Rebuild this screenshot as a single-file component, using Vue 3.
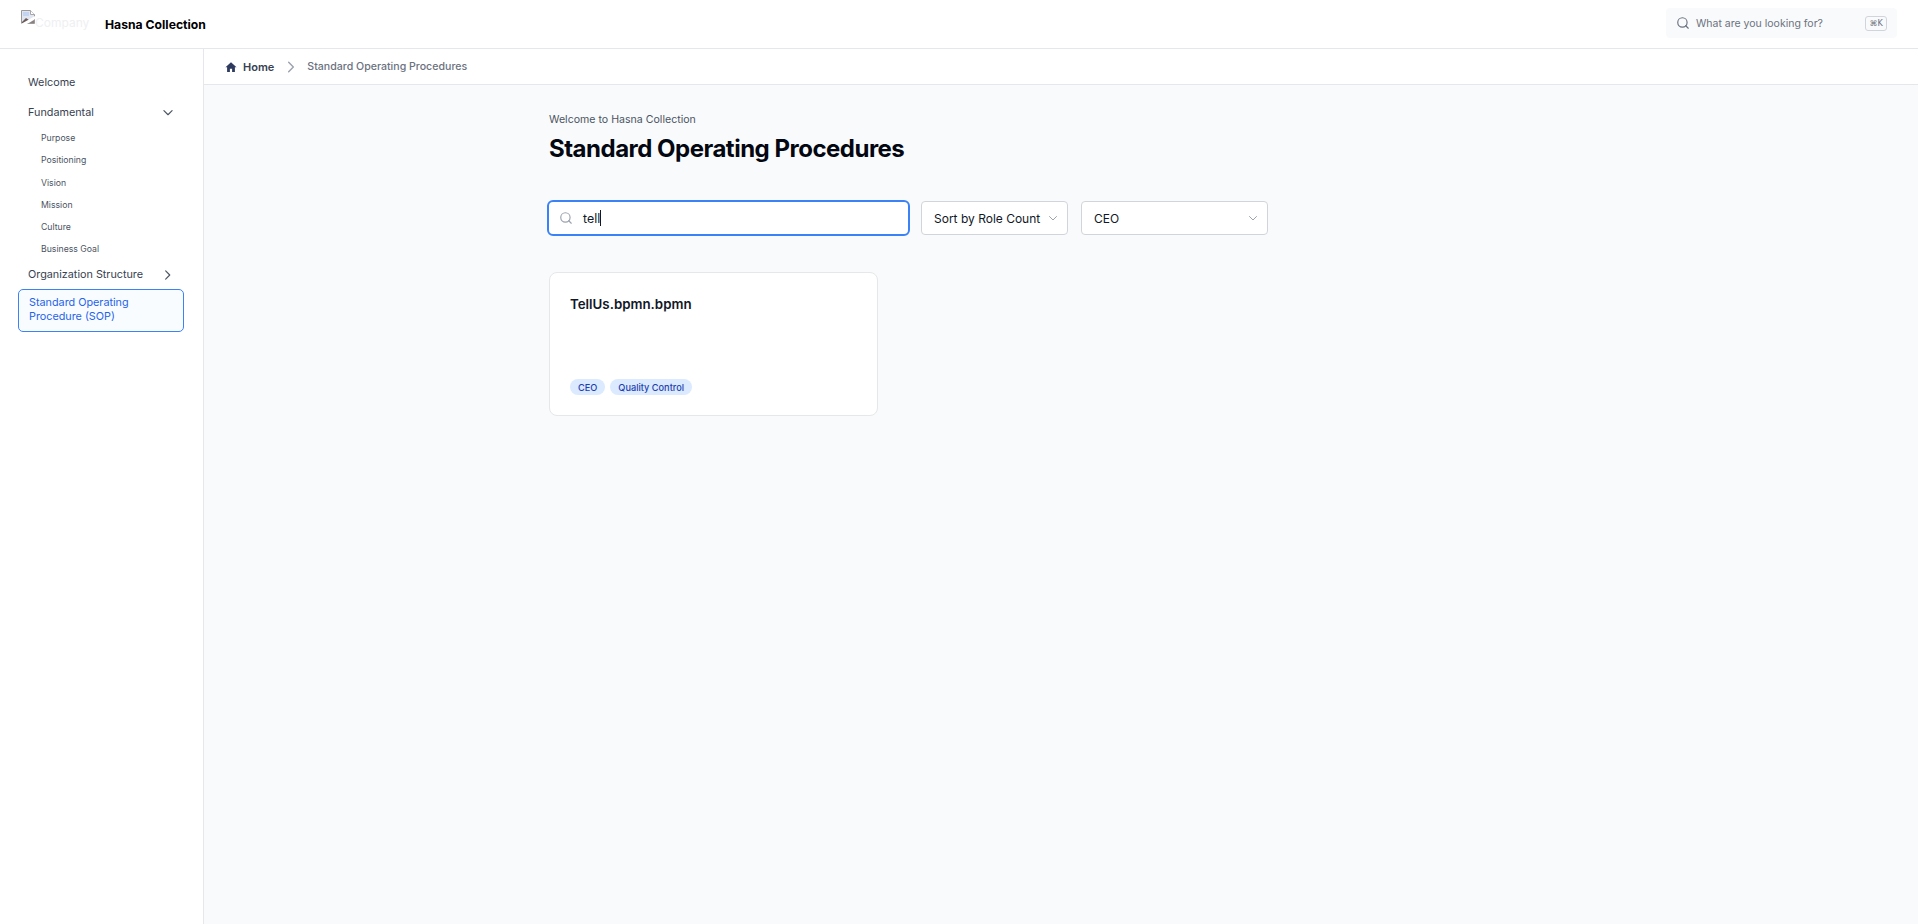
<template>
  <div class="page">
    <header class="topbar">
      <div class="brand">
        <div class="logo">
          <svg class="broken" width="14" height="14" viewBox="0 0 14 14">
            <path d="M.5 .5h9l4 4v9H.5z" fill="#dfe6f2" stroke="#9a9a9a" />
            <path d="M9.500 .5v4h4" fill="#fff" stroke="#a8a8a8" />
            <path d="M2 2h6v4H2z" fill="#c4d4f0" />
            <path d="M1 12l4-4 3 2-3 3H1z" fill="#6b5a55" />
            <path d="M0 14L14 6v3L6 14z" fill="#fff" />
            <path d="M8 13l5-3v3z" fill="#8d7f7c" />
          </svg>
          <span class="alt">Company</span>
        </div>
        <span class="brand-name">Hasna Collection</span>
      </div>
      <div class="global-search">
        <svg width="14" height="14" viewBox="0 0 24 24" fill="none" stroke="#6b7280" stroke-width="2" stroke-linecap="round">
          <circle cx="11" cy="11" r="8" />
          <path d="M21 21l-4.3-4.3" />
        </svg>
        <span class="placeholder">What are you looking for?</span>
        <kbd class="kbd">⌘K</kbd>
      </div>
    </header>

    <div class="body">
      <aside class="sidebar">
        <nav class="nav">
          <a class="nav-item">Welcome</a>
          <a class="nav-item with-icon">
            Fundamental
            <svg width="14" height="14" viewBox="0 0 24 24" fill="none" stroke="#4b5563" stroke-width="2" stroke-linecap="round" stroke-linejoin="round"><path d="M5 8l7 7 7-7" /></svg>
          </a>
          <div class="sub">
            <a v-for="s in subItems" :key="s" class="sub-item">{{ s }}</a>
          </div>
          <a class="nav-item with-icon org">
            Organization Structure
            <svg width="14" height="14" viewBox="0 0 24 24" fill="none" stroke="#4b5563" stroke-width="2" stroke-linecap="round" stroke-linejoin="round"><path d="M8 5l7 7-7 7" /></svg>
          </a>
          <a class="nav-active">Standard Operating Procedure (SOP)</a>
        </nav>
      </aside>

      <main class="main">
        <div class="crumbs">
          <svg width="12" height="12" viewBox="0 0 24 24" fill="#2f3a5f"><path d="M12 2.500L1 12.500h3.200V22h5.600v-6.500h4.400V22h5.600v-9.500H23z" /></svg>
          <span class="crumb-home">Home</span>
          <svg class="crumb-sep" width="14" height="14" viewBox="0 0 24 24" fill="none" stroke="#9ca3af" stroke-width="2.500" stroke-linecap="round" stroke-linejoin="round"><path d="M8 4l8 8-8 8" /></svg>
          <span class="crumb-current">Standard Operating Procedures</span>
        </div>

        <div class="content">
          <p class="welcome">Welcome to Hasna Collection</p>
          <h1 class="title">Standard Operating Procedures</h1>

          <div class="filters">
            <div class="search">
              <svg width="14" height="14" viewBox="0 0 24 24" fill="none" stroke="#9ca3af" stroke-width="2" stroke-linecap="round">
                <circle cx="11" cy="11" r="8" />
                <path d="M21 21l-4.3-4.3" />
              </svg>
              <span class="typed">tell</span><span class="caret"></span>
            </div>
            <div class="select sort">
              <span>Sort by Role Count</span>
              <svg width="12" height="12" viewBox="0 0 24 24" fill="none" stroke="#9ca3af" stroke-width="2" stroke-linecap="round" stroke-linejoin="round"><path d="M5 9l7 7 7-7" /></svg>
            </div>
            <div class="select role">
              <span>CEO</span>
              <svg width="12" height="12" viewBox="0 0 24 24" fill="none" stroke="#9ca3af" stroke-width="2" stroke-linecap="round" stroke-linejoin="round"><path d="M5 9l7 7 7-7" /></svg>
            </div>
          </div>

          <div class="grid">
            <article class="card">
              <h3 class="card-title">TellUs.bpmn.bpmn</h3>
              <div class="tags">
                <span v-for="t in tags" :key="t" class="tag">{{ t }}</span>
              </div>
            </article>
          </div>
        </div>
      </main>
    </div>
  </div>
</template>

<script setup>
const subItems = ['Purpose', 'Positioning', 'Vision', 'Mission', 'Culture', 'Business Goal']
const tags = ['CEO', 'Quality Control']
</script>

<style>
html, body {
  margin: 0;
  background: #fff;
}
</style>

<style scoped>
.page {
  height: 924px;
  display: flex;
  flex-direction: column;
  overflow: hidden;
  font-family: Inter, "Liberation Sans", sans-serif;
  color: #111827;
}

.topbar {
  height: 49px;
  flex: none;
  box-sizing: border-box;
  display: flex;
  align-items: center;
  justify-content: space-between;
  border-bottom: 1px solid #e5e7eb;
  padding: 0 21px;
  background: #fff;
}

.brand {
  display: flex;
  align-items: center;
}

.logo {
  width: 84px;
  height: 32px;
  position: relative;
  top: -4px;
  display: flex;
  align-items: center;
  overflow: hidden;
}

.broken {
  flex: none;
  margin-top: -6px;
}

.alt {
  font-size: 12px;
  color: #eef0f2;
  margin-top: 4px;
}

.brand-name {
  font-size: 12.2px;
  font-weight: 700;
  color: #000;
  margin-top: 1px;
}

.global-search {
  width: 231px;
  height: 30px;
  box-sizing: border-box;
  display: flex;
  align-items: center;
  background: #f9fafb;
  border-radius: 4px;
  padding: 0 10px;
  position: relative;
  top: -1px;
}

.placeholder {
  font-size: 10.5px;
  color: #6b7280;
  margin-left: 6px;
  flex: 1;
}

.kbd {
  width: 22px;
  height: 15px;
  box-sizing: border-box;
  border: 1px solid #d1d5db;
  border-radius: 3px;
  font-size: 8px;
  line-height: 13px;
  text-align: center;
  color: #6b7280;
  font-family: "DejaVu Sans", sans-serif;
}

.body {
  flex: 1;
  display: flex;
  min-height: 0;
}

.sidebar {
  width: 204px;
  flex: none;
  box-sizing: border-box;
  border-right: 1px solid #e5e7eb;
  background: #fff;
  padding: 19px 18px 0;
}

.nav {
  display: flex;
  flex-direction: column;
}

.nav-item {
  font-size: 10.8px;
  line-height: 29px;
  color: #374151;
  padding-left: 10px;
  display: flex;
  align-items: center;
  justify-content: space-between;
}

.with-icon {
  margin-top: 1px;
}

.with-icon svg {
  margin-right: 10px;
}

.sub {
  display: flex;
  flex-direction: column;
  padding-left: 23px;
}

.sub-item {
  font-size: 8.7px;
  line-height: 22.3px;
  color: #4b5563;
}

.org {
  margin-top: 0;
  line-height: 28px;
}

.org svg {
  margin-right: 0;
  position: relative;
  left: -10px;
}

.nav-active {
  box-sizing: border-box;
  width: 166px;
  height: 43px;
  border: 1px solid #3b82f6;
  border-radius: 5px;
  background: #f9fcfe;
  color: #2563eb;
  font-size: 10.8px;
  line-height: 14px;
  padding: 6px 10px;
}

.main {
  flex: 1;
  min-width: 0;
  background: #f9fafb;
}

.crumbs {
  height: 36px;
  box-sizing: border-box;
  background: #fff;
  border-bottom: 1px solid #e5e7eb;
  display: flex;
  align-items: center;
  padding-left: 21px;
  font-size: 10.6px;
}

.crumb-home {
  font-size: 11px;
  font-weight: 600;
  color: #374151;
  margin-left: 6px;
}

.crumb-sep {
  margin: 0 9px 0 10px;
}

.crumb-current {
  font-weight: 500;
  color: #6b7280;
}

.content {
  width: 1024px;
  margin: 0 auto;
  padding-top: 27px;
}

.welcome {
  margin: 0;
  font-size: 10.6px;
  line-height: 15px;
  color: #4b5563;
}

.title {
  margin: 6px 0 0;
  font-size: 24px;
  line-height: 32px;
  font-weight: 700;
  letter-spacing: -0.5px;
  color: #030712;
}

.filters {
  display: flex;
  align-items: center;
  margin-top: 35px;
  margin-left: -2px;
}

.search {
  width: 363px;
  height: 36px;
  box-sizing: border-box;
  background: #fff;
  border: 2px solid #3b82f6;
  border-radius: 6px;
  display: flex;
  align-items: center;
  padding-left: 10px;
}

.typed {
  font-size: 12.4px;
  color: #111827;
  margin-left: 10px;
}

.caret {
  width: 1px;
  height: 16px;
  background: #111827;
}

.select {
  height: 34px;
  box-sizing: border-box;
  background: #fff;
  border: 1px solid #d1d5db;
  border-radius: 4px;
  display: flex;
  align-items: center;
  justify-content: space-between;
  font-size: 12px;
  color: #111827;
  padding: 0 8px 0 12px;
  white-space: nowrap;
}

.sort {
  width: 147px;
  margin-left: 11px;
}

.role {
  width: 187px;
  margin-left: 13px;
}

.grid {
  display: grid;
  grid-template-columns: repeat(3, 1fr);
  gap: 18px;
  margin-top: 36px;
}

.card {
  height: 144px;
  box-sizing: border-box;
  background: #fff;
  border: 1px solid #e5e7eb;
  border-radius: 8px;
  padding: 21px 20px 20px;
  display: flex;
  flex-direction: column;
  justify-content: space-between;
}

.card-title {
  margin: 0;
  font-size: 13.3px;
  line-height: 20px;
  font-weight: 600;
  color: #111827;
}

.tags {
  display: flex;
  gap: 5px;
}

.tag {
  height: 16px;
  display: flex;
  align-items: center;
  padding: 0 8px;
  border-radius: 8px;
  background: #dbeafe;
  color: #1e40af;
  font-size: 9.2px;
  font-weight: 500;
}
</style>
